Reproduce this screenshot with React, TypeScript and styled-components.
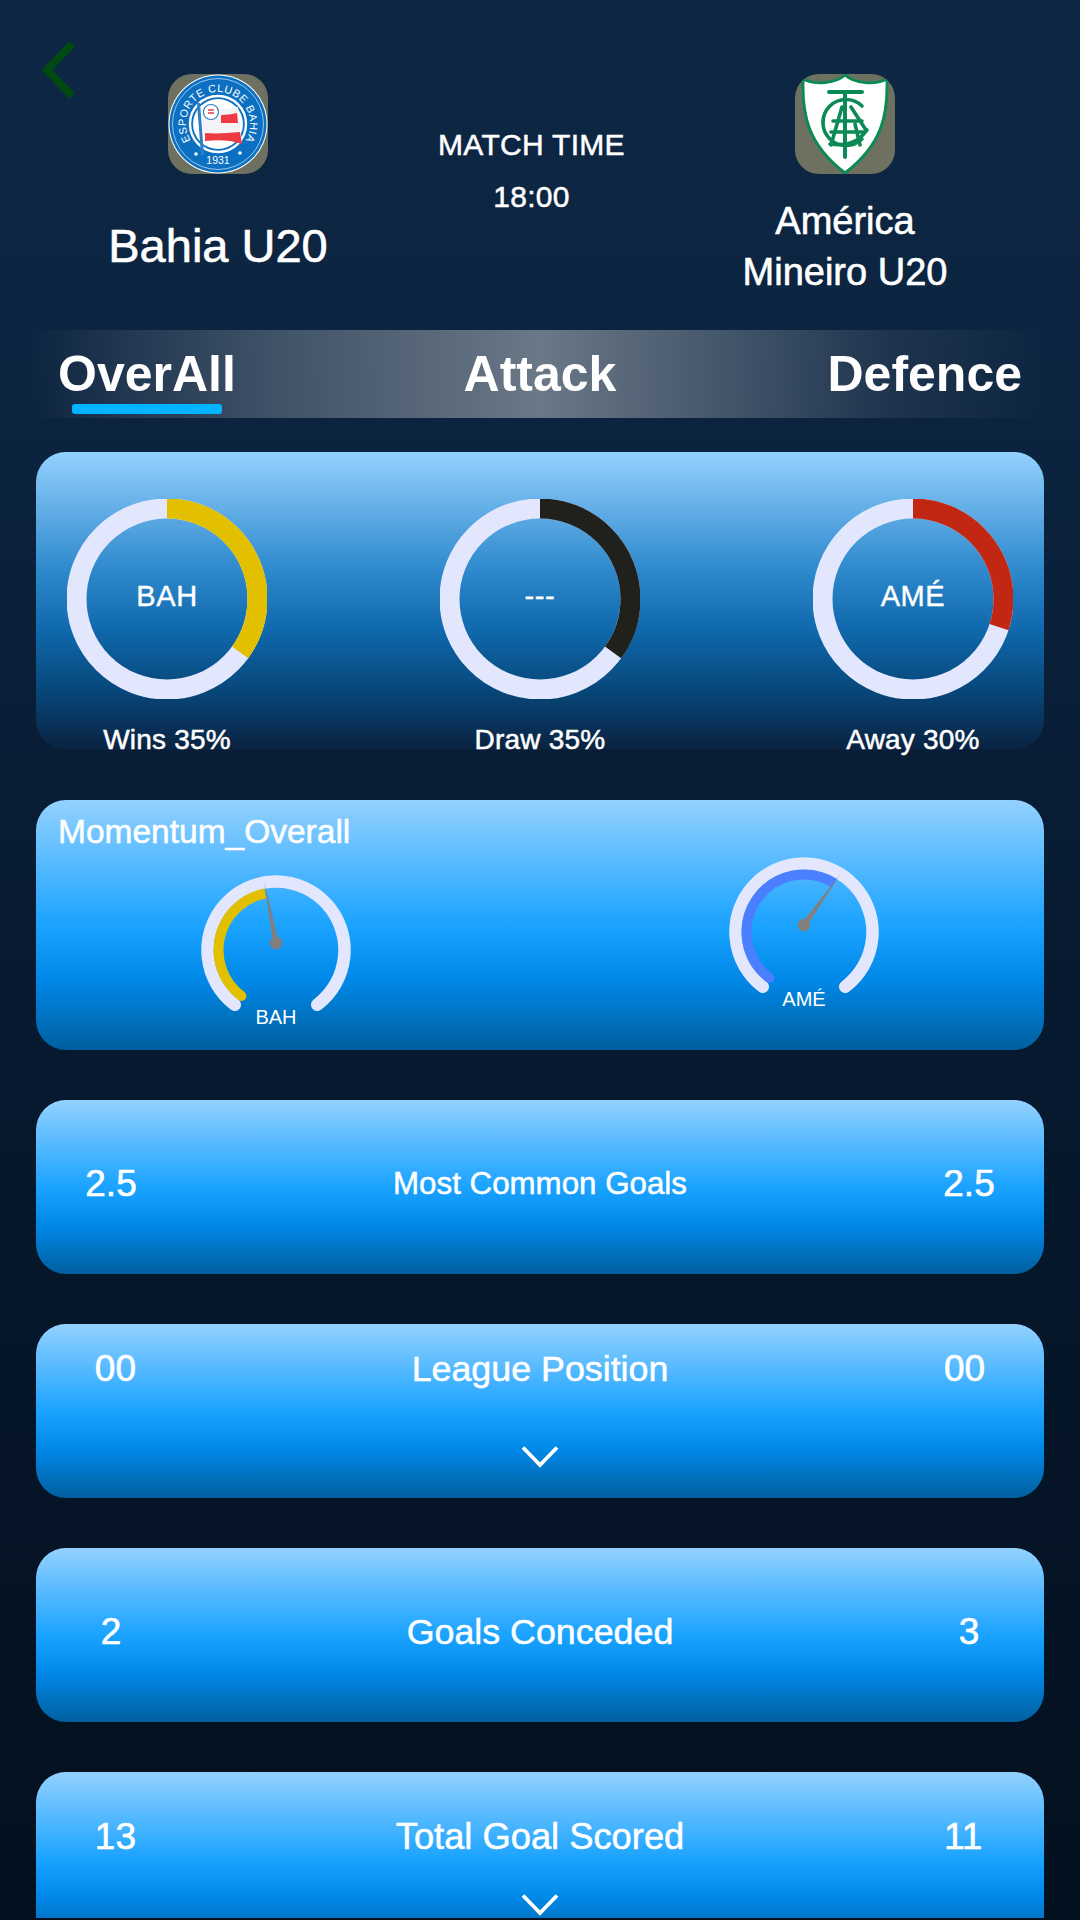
import React from 'react';
import styled, { createGlobalStyle } from 'styled-components';

const GlobalStyle = createGlobalStyle`
  html, body {
    margin: 0;
    padding: 0;
    background: #03101f;
  }
  * {
    box-sizing: border-box;
  }
`;

const polar = (cx: number, cy: number, r: number, deg: number) => {
  const a = (deg * Math.PI) / 180;
  return [cx + r * Math.sin(a), cy - r * Math.cos(a)];
};

const arcPath = (cx: number, cy: number, r: number, from: number, to: number) => {
  const [x1, y1] = polar(cx, cy, r, from);
  const [x2, y2] = polar(cx, cy, r, to);
  const large = to - from > 180 ? 1 : 0;
  return `M${x1} ${y1} A${r} ${r} 0 ${large} 1 ${x2} ${y2}`;
};

const BahiaCrest = () => (
  <svg width="100" height="100" viewBox="0 0 100 100">
    <circle cx="50" cy="50" r="49.5" fill="#fff" />
    <circle cx="50" cy="50" r="48.5" fill="#0c70c2" />
    <circle cx="50" cy="50" r="45.5" fill="none" stroke="#d8eaf8" strokeWidth="0.7" />
    <circle cx="50" cy="50" r="28" fill="none" stroke="#fff" strokeWidth="2.4" />
    <circle cx="50" cy="50" r="25" fill="#fff" />
    <defs>
      <path id="bahia-arc" d="M50 82 A32 32 0 1 1 50 18 A32 32 0 1 1 50 82" />
    </defs>
    <CrestText fontSize="10.8" letterSpacing="0.5">
      <textPath href="#bahia-arc" startOffset="50%" textAnchor="middle">
        ESPORTE CLUBE BAHIA
      </textPath>
    </CrestText>
    <CrestText x="50" y="90" fontSize="10.5" textAnchor="middle">
      1931
    </CrestText>
    <circle cx="28" cy="80" r="1.8" fill="#fff" />
    <circle cx="72" cy="79" r="1.8" fill="#fff" />
    <path d="M29 29 L32 29 L36 81 L33 81 Z" fill="#2d7fc6" />
    <path d="M33 31 C46 36 58 36 70 33 L74 69 C60 64 48 66 36 67 Z" fill="#f4f4f6" />
    <path d="M53 41 C59 41 64 40 69 39 L70 49 L53 49 Z" fill="#ee3a43" />
    <path d="M37 59 C48 60 60 59 72 58 L74 70 C60 65 48 66 37 67 Z" fill="#ee3a43" />
    <circle cx="43" cy="38" r="7.5" fill="#fff" stroke="#2d7fc6" strokeWidth="1.2" />
    <path d="M40 36 H46 M40 39 H46" stroke="#e0414a" strokeWidth="1.5" />
  </svg>
);

const AmericaCrest = () => (
  <svg width="100" height="100" viewBox="0 0 100 100">
    <path
      d="M8 5 C20 11 40 10 50 1 C60 10 80 11 92 5 C93 40 88 70 50 99 C12 70 7 40 8 5 Z"
      fill="#fff"
      stroke="#0c8a55"
      strokeWidth="3"
    />
    <g fill="none" stroke="#0c8a55" strokeWidth="3.6" strokeLinecap="round">
      <path d="M34 18 H67" strokeWidth="4" />
      <path d="M50 18 V83" strokeWidth="4" />
      <path d="M67 32 A23 23 0 1 0 67 65" />
      <path d="M36 71 L47 33 M56 33 L71 56 M65 71 L60 50" />
      <path d="M38 47 H67 M36 58 H70" />
      <path d="M35 70 C50 72 62 70 72 56" />
    </g>
  </svg>
);

const BackArrow = () => (
  <svg width="44" height="64" viewBox="0 0 44 64">
    <path d="M32 6 L7 32 L32 58" fill="none" stroke="#004a12" strokeWidth="8" />
  </svg>
);

const Chevron = () => (
  <ChevronIcon width="40" height="24" viewBox="0 0 40 24">
    <path d="M3 3.5 L20 21 L37 3.5" fill="none" stroke="#fff" strokeWidth="3.8" />
  </ChevronIcon>
);

const RING_R = 90.5;
const RING_LEN = 2 * Math.PI * RING_R;

const Ring = ({ code, share, color }: { code: string; share: number; color: string }) => (
  <RingBox>
    <svg width="200" height="200" viewBox="0 0 200 200">
      <circle cx="100" cy="100" r={RING_R} fill="none" stroke="#e2e7fd" strokeWidth="20" />
      <circle
        cx="100"
        cy="100"
        r={RING_R}
        fill="none"
        stroke={color}
        strokeWidth="20"
        strokeDasharray={`${RING_LEN * share} ${RING_LEN}`}
        transform="rotate(-90 100 100)"
      />
    </svg>
    <RingCode>{code}</RingCode>
  </RingBox>
);

const Gauge = ({
  code,
  angle,
  color,
  drop,
  tip,
}: {
  code: string;
  angle: number;
  color: string;
  drop: number;
  tip: [number, number];
}) => {
  const hub: [number, number] = [80, 71];
  const dx = tip[0] - hub[0];
  const dy = tip[1] - hub[1];
  const len = Math.hypot(dx, dy);
  const nx = (-dy / len) * 3;
  const ny = (dx / len) * 3;
  const fadeId = `needle-${code}`;
  const [capX, capY] = polar(80, 78, 57.5, -143);
  return (
    <GaugeBox $drop={drop}>
      <svg width="160" height="160" viewBox="0 0 160 160">
        <defs>
          <linearGradient id={fadeId} gradientUnits="userSpaceOnUse" x1={hub[0]} y1={hub[1]} x2={tip[0]} y2={tip[1]}>
            <stop offset="0.8" stopColor="#808080" />
            <stop offset="1" stopColor="#808080" stopOpacity="0.25" />
          </linearGradient>
        </defs>
        <path
          d={arcPath(80, 78, 68.5, -143, 143)}
          fill="none"
          stroke="#e2e7fd"
          strokeWidth="12.5"
          strokeLinecap="round"
        />
        <path d={arcPath(80, 78, 57.5, -143, angle)} fill="none" stroke={color} strokeWidth="10" />
        <circle cx={capX} cy={capY} r="5" fill={color} />
        <polygon
          points={`${hub[0] + nx},${hub[1] + ny} ${tip[0]},${tip[1]} ${hub[0] - nx},${hub[1] - ny}`}
          fill={`url(#${fadeId})`}
        />
        <circle cx={hub[0]} cy={hub[1]} r="6.3" fill="#808080" />
        <GaugeCode x="80" y="152">
          {code}
        </GaugeCode>
      </svg>
    </GaugeBox>
  );
};

const stats = [
  { left: '2.5', right: '2.5', label: 'Most Common Goals', top: 62, size: 31.3, open: false },
  { left: '00', right: '00', label: 'League Position', top: 23, size: 35.8, open: true },
  { left: '2', right: '3', label: 'Goals Conceded', top: 62, size: 35.8, open: false },
  { left: '13', right: '11', label: 'Total Goal Scored', top: 43, size: 36.3, open: true },
];

const App = () => {
  return (
    <>
      <GlobalStyle />
      <Page>
        <Header>
          <BackButton>
            <BackArrow />
          </BackButton>
          <Team>
            <LogoTile>
              <BahiaCrest />
            </LogoTile>
            <TeamName $size={47} $gap={46}>
              Bahia U20
            </TeamName>
          </Team>
          <MatchInfo>
            <MatchLine>MATCH TIME</MatchLine>
            <MatchLine>18:00</MatchLine>
          </MatchInfo>
          <Team>
            <LogoTile>
              <AmericaCrest />
            </LogoTile>
            <TeamName $size={38} $gap={22}>
              América
              <br />
              Mineiro U20
            </TeamName>
          </Team>
        </Header>

        <Tabs>
          <Tab>
            OverAll
            <TabMark />
          </Tab>
          <Tab $place="center">Attack</Tab>
          <Tab $place="end">Defence</Tab>
        </Tabs>

        <Cards>
          <RingCard>
            <RingItem>
              <Ring code="BAH" share={0.35} color="#e2c000" />
              <RingLabel>Wins 35%</RingLabel>
            </RingItem>
            <RingItem>
              <Ring code="---" share={0.35} color="#20201c" />
              <RingLabel>Draw 35%</RingLabel>
            </RingItem>
            <RingItem>
              <Ring code="AMÉ" share={0.3} color="#c22713" />
              <RingLabel>Away 30%</RingLabel>
            </RingItem>
          </RingCard>

          <MomentumCard>
            <MomentumTitle>Momentum_Overall</MomentumTitle>
            <GaugeRow>
              <Gauge code="BAH" angle={-10.8} color="#e2c000" drop={19.5} tip={[68, 9]} />
              <Gauge code="AMÉ" angle={32} color="#4a80ff" drop={1.5} tip={[116.7, 19.5]} />
            </GaugeRow>
          </MomentumCard>

          {stats.map((s) => (
            <StatCard key={s.label} $top={s.top}>
              <StatRow $open={s.open}>
                <StatValue $align={s.open ? 'right' : 'center'}>{s.left}</StatValue>
                <StatLabel $size={s.size}>{s.label}</StatLabel>
                <StatValue $align={s.open ? 'left' : 'center'}>{s.right}</StatValue>
              </StatRow>
              {s.open && <Chevron />}
            </StatCard>
          ))}
        </Cards>
      </Page>
    </>
  );
};

const Page = styled.div`
  position: relative;
  width: 1080px;
  height: 1918px;
  overflow: hidden;
  color: #fff;
  font-family: 'Liberation Sans', Arial, sans-serif;
  background: linear-gradient(180deg, #0d2744 0%, #0c2440 20%, #071a30 50%, #03101f 100%);
`;

const Header = styled.header`
  position: relative;
  display: grid;
  grid-template-columns: 360px 1fr 360px;
  height: 330px;
  padding: 74px 55px 0 38px;
`;

const BackButton = styled.div`
  position: absolute;
  left: 40px;
  top: 38px;
  line-height: 0;
`;

const Team = styled.div`
  display: flex;
  flex-direction: column;
  align-items: center;
`;

const LogoTile = styled.div`
  width: 100px;
  height: 100px;
  border-radius: 24px;
  background: #6e7060;
  overflow: hidden;
  line-height: 0;
`;

const TeamName = styled.div<{ $size: number; $gap: number }>`
  margin-top: ${(p) => p.$gap}px;
  font-size: ${(p) => p.$size}px;
  line-height: 51px;
  text-align: center;
  -webkit-text-stroke: 0.6px #fff;
`;

const MatchInfo = styled.div`
  display: flex;
  flex-direction: column;
  align-items: center;
  gap: 16px;
  padding-top: 53px;
`;

const MatchLine = styled.div`
  font-size: 30px;
  line-height: 36px;
  letter-spacing: 0.3px;
  -webkit-text-stroke: 0.5px #fff;
`;

const Tabs = styled.nav`
  display: grid;
  grid-template-columns: 1fr auto 1fr;
  align-items: start;
  height: 88px;
  margin: 0 30px;
  padding: 19px 28px 0;
  background: linear-gradient(
    90deg,
    rgba(106, 120, 135, 0) 0%,
    rgba(106, 120, 135, 0.2) 8%,
    rgba(106, 120, 135, 0.55) 24%,
    #6a7887 50%,
    rgba(106, 120, 135, 0.55) 70%,
    rgba(106, 120, 135, 0.2) 84%,
    rgba(106, 120, 135, 0) 100%
  );
`;

const Tab = styled.div<{ $place?: string }>`
  display: flex;
  flex-direction: column;
  align-items: center;
  justify-self: ${(p) => p.$place ?? 'start'};
  font-size: 50px;
  line-height: 50px;
  font-weight: 700;
`;

const TabMark = styled.span`
  width: 150px;
  height: 10px;
  margin-top: 5px;
  border-radius: 3px;
  background: #00b4ff;
`;

const Cards = styled.div`
  display: flex;
  flex-direction: column;
  gap: 50px;
  padding: 34px 36px 0;
`;

const RingCard = styled.section`
  display: flex;
  justify-content: space-between;
  height: 298px;
  padding: 47px 31px 0;
  border-radius: 30px;
  background: linear-gradient(180deg, #93d1ff 0%, #2d88cc 40%, #0f68ab 60%, #07477a 80%, #0a2240 100%);
`;

const RingItem = styled.div`
  display: flex;
  flex-direction: column;
  align-items: center;
  width: 200px;
`;

const RingBox = styled.div`
  position: relative;
  width: 200px;
  height: 200px;
  line-height: 0;
`;

const RingCode = styled.span`
  position: absolute;
  inset: 0 0 6px;
  display: flex;
  align-items: center;
  justify-content: center;
  font-size: 29px;
  line-height: 34px;
  letter-spacing: 0.6px;
  -webkit-text-stroke: 0.4px #fff;
`;

const RingLabel = styled.div`
  margin-top: 25px;
  font-size: 28px;
  line-height: 32px;
  white-space: nowrap;
  letter-spacing: 0.2px;
  -webkit-text-stroke: 0.5px #fff;
`;

const blueCard = `
  border-radius: 30px;
  background: linear-gradient(180deg, #93d1ff 0%, #1aa3ff 50%, #0088e8 72%, #005f9e 100%);
`;

const MomentumCard = styled.section`
  ${blueCard}
  height: 250px;
  padding: 12px 22px 0;
`;

const MomentumTitle = styled.div`
  font-size: 33.5px;
  line-height: 40px;
  -webkit-text-stroke: 0.5px #fff;
`;

const GaugeRow = styled.div`
  display: flex;
  justify-content: space-between;
  padding: 0 138px;
`;

const GaugeBox = styled.div<{ $drop: number }>`
  width: 160px;
  height: 160px;
  margin-top: ${(p) => p.$drop}px;
  line-height: 0;
`;

const GaugeCode = styled.text`
  fill: #fff;
  font-size: 20px;
  text-anchor: middle;
`;

const CrestText = styled.text`
  fill: #fff;
  font-family: 'Liberation Sans', Arial, sans-serif;
`;

const StatCard = styled.section<{ $top: number }>`
  ${blueCard}
  display: flex;
  flex-direction: column;
  align-items: center;
  flex: none;
  height: 174px;
  padding-top: ${(p) => p.$top}px;
  padding-bottom: 30px;
`;

const StatRow = styled.div<{ $open: boolean }>`
  display: grid;
  grid-template-columns: ${(p) => (p.$open ? '100px 1fr 100px' : '150px 1fr 150px')};
  align-items: center;
  width: 100%;
  height: 44px;
`;

const StatValue = styled.div<{ $align: string }>`
  font-size: 37px;
  line-height: 44px;
  text-align: ${(p) => p.$align};
  -webkit-text-stroke: 0.6px #fff;
`;

const StatLabel = styled.div<{ $size: number }>`
  font-size: ${(p) => p.$size}px;
  line-height: 44px;
  text-align: center;
  -webkit-text-stroke: 0.5px #fff;
`;

const ChevronIcon = styled.svg`
  margin-top: auto;
  flex: none;
`;

export default App;
